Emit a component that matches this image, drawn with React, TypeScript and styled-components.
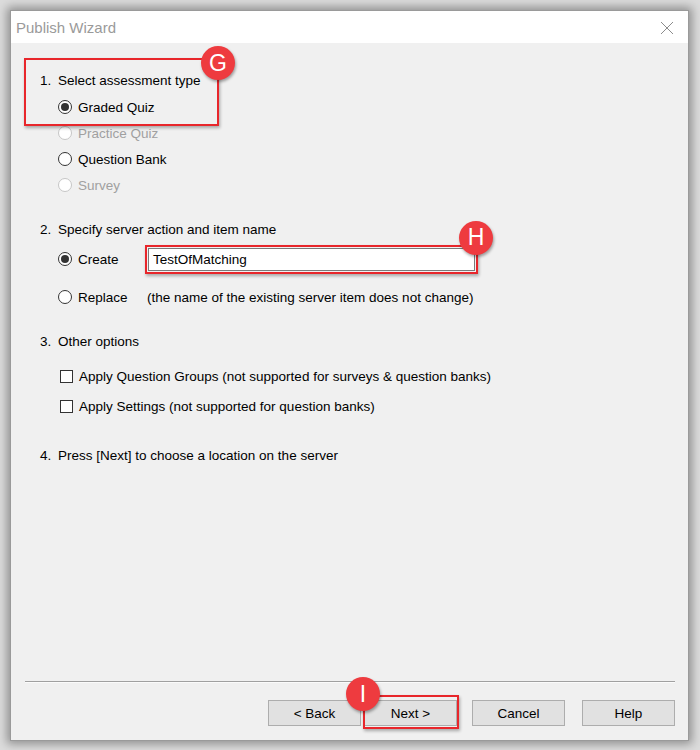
import React from "react";
import styled, { createGlobalStyle } from "styled-components";

const GlobalStyle = createGlobalStyle`
  html, body {
    margin: 0;
    padding: 0;
    background: #ffffff;
  }
  body {
    font-family: "Liberation Sans", Arial, sans-serif;
  }
`;

const Screen = styled.div`
  width: 700px;
  height: 750px;
  padding: 10px 0 0 10px;
  box-sizing: border-box;
  background: #dcdcdc;
`;

const Window = styled.div`
  width: 679px;
  height: 731px;
  box-sizing: border-box;
  border: 1px solid #9a9a9a;
  background: #f0f0f0;
  display: flex;
  flex-direction: column;
  box-shadow: 0 0 9px 3px rgba(0, 0, 0, 0.35);
`;

const TitleBar = styled.div`
  height: 32px;
  background: #ffffff;
  display: flex;
  align-items: center;
  justify-content: space-between;
  padding: 0 14px 0 5px;
  flex-shrink: 0;
`;

const Title = styled.span`
  font-size: 15px;
  color: #9a9a9a;
`;

const CloseIcon = styled.svg`
  width: 14px;
  height: 14px;
  margin-top: 1px;
`;

const Content = styled.div`
  flex: 1;
  display: flex;
  flex-direction: column;
  padding: 27px 0 0 29px;
  font-size: 13.5px;
  color: #000;
`;

const Row = styled.div<{ $top?: number; $h?: number; $indent?: number }>`
  display: flex;
  align-items: center;
  height: ${(p) => p.$h ?? 20}px;
  margin-top: ${(p) => p.$top ?? 0}px;
  padding-left: ${(p) => p.$indent ?? 0}px;
  white-space: nowrap;
`;

const Num = styled.span`
  width: 18px;
`;

const Label = styled.span<{ $disabled?: boolean; $width?: number }>`
  color: ${(p) => (p.$disabled ? "#a0a0a0" : "#000")};
  ${(p) => (p.$width ? `width: ${p.$width}px;` : "")}
`;

const RadioCircle = styled.span<{ $checked?: boolean; $disabled?: boolean }>`
  width: 14px;
  height: 14px;
  box-sizing: border-box;
  border-radius: 50%;
  border: 1px solid ${(p) => (p.$disabled ? "#c6c6c6" : "#333")};
  background: #fff;
  display: flex;
  align-items: center;
  justify-content: center;
  margin-right: 6px;
  flex-shrink: 0;
  &::after {
    content: "";
    width: 8px;
    height: 8px;
    border-radius: 50%;
    background: ${(p) => (p.$checked ? "#333" : "transparent")};
  }
`;

const CheckBox = styled.span`
  width: 13px;
  height: 13px;
  box-sizing: border-box;
  border: 1px solid #333;
  background: #fff;
  margin-right: 6px;
  flex-shrink: 0;
`;

const Group = styled.div`
  position: relative;
  display: flex;
  flex-direction: column;
`;

const Frame = styled.div<{ $t: number; $l: number; $w: number; $h: number }>`
  position: absolute;
  top: ${(p) => p.$t}px;
  left: ${(p) => p.$l}px;
  width: ${(p) => p.$w}px;
  height: ${(p) => p.$h}px;
  box-sizing: border-box;
  border: 2px solid #e8262b;
  box-shadow: 1px 2px 3px rgba(0, 0, 0, 0.3);
  pointer-events: none;
`;

const Badge = styled.div<{ $x: number; $y: number }>`
  position: absolute;
  left: ${(p) => p.$x}px;
  top: ${(p) => p.$y}px;
  width: 34px;
  height: 34px;
  margin: -17px 0 0 -17px;
  border-radius: 50%;
  background: #ee3b3f;
  color: #fff;
  font-family: "Liberation Sans", Arial, sans-serif;
  font-size: 23px;
  display: flex;
  align-items: center;
  justify-content: center;
  box-shadow: 1px 2px 3px rgba(0, 0, 0, 0.35);
  z-index: 2;
`;

const InputWrap = styled.div`
  position: relative;
`;

const TextInput = styled.div`
  width: 327px;
  height: 23px;
  box-sizing: border-box;
  border: 1px solid #7a7a7a;
  background: #fff;
  padding: 0 4px;
  display: flex;
  align-items: center;
  font-size: 13.5px;
`;

const Footer = styled.div`
  display: flex;
  flex-direction: column;
  font-size: 13.5px;
`;

const Separator = styled.div`
  margin: 0 13px 0 14px;
  border-top: 1px solid #a0a0a0;
  border-bottom: 1px solid #fbfbfb;
`;

const ButtonRow = styled.div`
  display: flex;
  justify-content: flex-end;
  align-items: center;
  padding: 17px 13px 14px 0;
`;

const Button = styled.div<{ $gap?: number }>`
  position: relative;
  width: 93px;
  height: 26px;
  box-sizing: border-box;
  border: 1px solid #adadad;
  background: #e1e1e1;
  color: #000;
  display: flex;
  align-items: center;
  justify-content: center;
  margin-left: ${(p) => p.$gap ?? 0}px;
`;

export default function App() {
  return (
    <>
      <GlobalStyle />
      <Screen>
        <Window>
          <TitleBar>
            <Title>Publish Wizard</Title>
            <CloseIcon viewBox="0 0 14 14">
              <path d="M1 1 L13 13 M13 1 L1 13" stroke="#8c8c8c" strokeWidth="1" fill="none" />
            </CloseIcon>
          </TitleBar>
          <Content>
            <Group>
              <Row>
                <Num>1.</Num>
                <Label>Select assessment type</Label>
              </Row>
              <Row $top={4} $h={26} $indent={18}>
                <RadioCircle $checked />
                <Label>Graded Quiz</Label>
              </Row>
              <Frame $t={-12} $l={-16} $w={195} $h={68} />
              <Badge $x={178} $y={-7}>G</Badge>
            </Group>
            <Row $h={26} $indent={18}>
              <RadioCircle $disabled />
              <Label $disabled>Practice Quiz</Label>
            </Row>
            <Row $h={26} $indent={18}>
              <RadioCircle />
              <Label>Question Bank</Label>
            </Row>
            <Row $h={26} $indent={18}>
              <RadioCircle $disabled />
              <Label $disabled>Survey</Label>
            </Row>

            <Row $top={21}>
              <Num>2.</Num>
              <Label>Specify server action and item name</Label>
            </Row>
            <Row $top={8} $h={24} $indent={18}>
              <RadioCircle $checked />
              <Label $width={70}>Create</Label>
              <InputWrap>
                <TextInput>TestOfMatching</TextInput>
                <Frame $t={-3} $l={-3} $w={333} $h={29} />
                <Badge $x={328} $y={-10}>H</Badge>
              </InputWrap>
            </Row>
            <Row $top={14} $h={24} $indent={18}>
              <RadioCircle />
              <Label $width={69}>Replace</Label>
              <Label>(the name of the existing server item does not change)</Label>
            </Row>

            <Row $top={22}>
              <Num>3.</Num>
              <Label>Other options</Label>
            </Row>
            <Row $top={15} $indent={20}>
              <CheckBox />
              <Label>Apply Question Groups (not supported for surveys &amp; question banks)</Label>
            </Row>
            <Row $top={10} $indent={20}>
              <CheckBox />
              <Label>Apply Settings (not supported for question banks)</Label>
            </Row>

            <Row $top={29}>
              <Num>4.</Num>
              <Label>Press [Next] to choose a location on the server</Label>
            </Row>
          </Content>

          <Footer>
            <Separator />
            <ButtonRow>
              <Button>&lt; Back</Button>
              <Button $gap={3}>
                Next &gt;
                <Frame $t={-6} $l={-2} $w={96} $h={34} />
                <Badge $x={-2} $y={-7}>I</Badge>
              </Button>
              <Button $gap={15}>Cancel</Button>
              <Button $gap={17}>Help</Button>
            </ButtonRow>
          </Footer>
        </Window>
      </Screen>
    </>
  );
}
